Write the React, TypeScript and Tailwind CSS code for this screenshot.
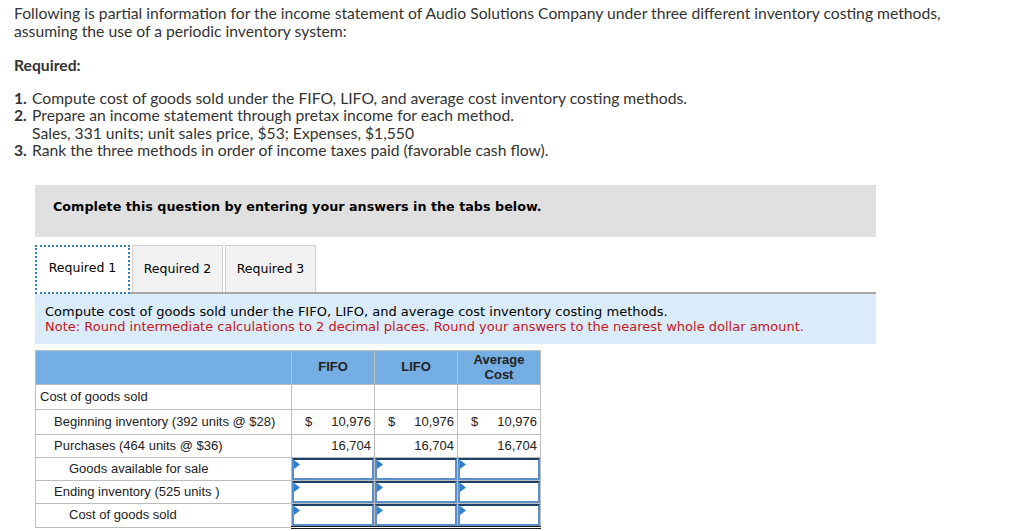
const proxima = "font-['Lato','Open_Sans',sans-serif]";

function Flag() {
  return (
    <svg className="absolute left-0 top-0" width="6" height="9" viewBox="0 0 6 9">
      <polygon points="0,0 6,4.5 0,9" fill="#2f7fd1" />
    </svg>
  );
}

function InputCell({ last }: { last?: boolean }) {
  return (
    <td className={`p-0 h-[23px] border border-[#bdbdbd] ${last ? "border-b-[3px] border-b-[#1a1a1a] border-double" : ""}`}>
      <div className="relative h-[22px] border-2 border-[#5b8fc9] border-t-[#1d3f68] bg-white">
        <Flag />
      </div>
    </td>
  );
}

function MoneyCell({ value, dollar }: { value: string; dollar?: boolean }) {
  return (
    <td className="border border-[#bdbdbd] px-[3px]">
      <div className="flex justify-between">
        <span className="pl-[10px]">{dollar ? "$" : ""}</span>
        <span>{value}</span>
      </div>
    </td>
  );
}

export default function App() {
  const rows = [
    { label: "Goods available for sale", indent: "pl-[33px]" },
    { label: "Ending inventory (525 units )", indent: "pl-[18px]" },
    { label: "Cost of goods sold", indent: "pl-[33px]" },
  ];

  return (
    <div className="w-[1024px] h-[531px] overflow-hidden bg-white">
      <div className={`${proxima} text-[15.7px] leading-[17.5px] text-[#333] pl-[14px] pt-[5px]`}>
        <p>
          Following is partial information for the income statement of Audio Solutions Company under three different inventory costing methods,
          <br />
          assuming the use of a periodic inventory system:
        </p>
        <p className="font-bold mt-[17px]">Required:</p>
        <ol className="mt-[15px]">
          <li className="flex">
            <span className="w-[18px] font-bold">1.</span>
            <span>Compute cost of goods sold under the FIFO, LIFO, and average cost inventory costing methods.</span>
          </li>
          <li className="flex">
            <span className="w-[18px] font-bold">2.</span>
            <span>
              Prepare an income statement through pretax income for each method.
              <br />
              Sales, 331 units; unit sales price, $53; Expenses, $1,550
            </span>
          </li>
          <li className="flex">
            <span className="w-[18px] font-bold">3.</span>
            <span>Rank the three methods in order of income taxes paid (favorable cash flow).</span>
          </li>
        </ol>
      </div>

      <div className="ml-[35px] w-[841px] mt-[25px] font-['DejaVu_Sans','Verdana',sans-serif]">
        <div className="h-[52px] bg-[#e0e0e0] pt-[14px] pl-[18px] text-[12.75px] leading-[15px] font-bold text-black">
          Complete this question by entering your answers in the tabs below.
        </div>

        <div className="mt-[8px] flex items-end h-[49px] text-[12.5px] text-black border-b-2 border-[#a8a8a8]">
          <div className="w-[95px] h-[49px] -mb-[2px] pb-[1px] bg-white border-2 border-dotted border-[#3a7cc4] flex items-center justify-center">
            Required 1
          </div>
          <div className="ml-[2px] w-[91px] h-full pt-[2px] bg-[#f2f2f2] border border-[#cfcfcf] border-b-0 flex items-center justify-center">
            Required 2
          </div>
          <div className="ml-[2px] w-[91px] h-full pt-[2px] bg-[#f2f2f2] border border-[#cfcfcf] border-b-0 flex items-center justify-center">
            Required 3
          </div>
        </div>

        <div className="h-[50px] bg-[#daebf9] pl-[10px] pt-[10px] text-[13px] leading-[15px]">
          <p className="text-black">Compute cost of goods sold under the FIFO, LIFO, and average cost inventory costing methods.</p>
          <p className="text-[#c4161c]">Note: Round intermediate calculations to 2 decimal places. Round your answers to the nearest whole dollar amount.</p>
        </div>

        <table className="mt-[6px] border-collapse font-['Liberation_Sans','Arial',sans-serif] text-[13px] text-[#222]">
          <colgroup>
            <col className="w-[256px]" />
            <col className="w-[83px]" />
            <col className="w-[83px]" />
            <col className="w-[83px]" />
          </colgroup>
          <thead>
            <tr className="h-[34px] bg-[#75aee3] font-bold">
              <th className="border border-[#bdbdbd]"></th>
              <th className="border border-[#bdbdbd] text-center">FIFO</th>
              <th className="border border-[#bdbdbd] text-center">LIFO</th>
              <th className="border border-[#bdbdbd] text-center leading-[15px]">
                Average
                <br />
                Cost
              </th>
            </tr>
          </thead>
          <tbody>
            <tr className="h-[25px]">
              <td className="border border-[#bdbdbd] pl-[4px]">Cost of goods sold</td>
              <td className="border border-[#bdbdbd]"></td>
              <td className="border border-[#bdbdbd]"></td>
              <td className="border border-[#bdbdbd]"></td>
            </tr>
            <tr className="h-[25px]">
              <td className="border border-[#bdbdbd] pl-[18px]">Beginning inventory (392 units @ $28)</td>
              <MoneyCell value="10,976" dollar />
              <MoneyCell value="10,976" dollar />
              <MoneyCell value="10,976" dollar />
            </tr>
            <tr className="h-[23px]">
              <td className="border border-[#bdbdbd] pl-[18px]">Purchases (464 units @ $36)</td>
              <MoneyCell value="16,704" />
              <MoneyCell value="16,704" />
              <MoneyCell value="16,704" />
            </tr>
            {rows.map((r, i) => (
              <tr key={r.label} className="h-[23px]">
                <td className={`border border-[#bdbdbd] ${r.indent}`}>{r.label}</td>
                <InputCell last={i === rows.length - 1} />
                <InputCell last={i === rows.length - 1} />
                <InputCell last={i === rows.length - 1} />
              </tr>
            ))}
          </tbody>
        </table>
      </div>
    </div>
  );
}
